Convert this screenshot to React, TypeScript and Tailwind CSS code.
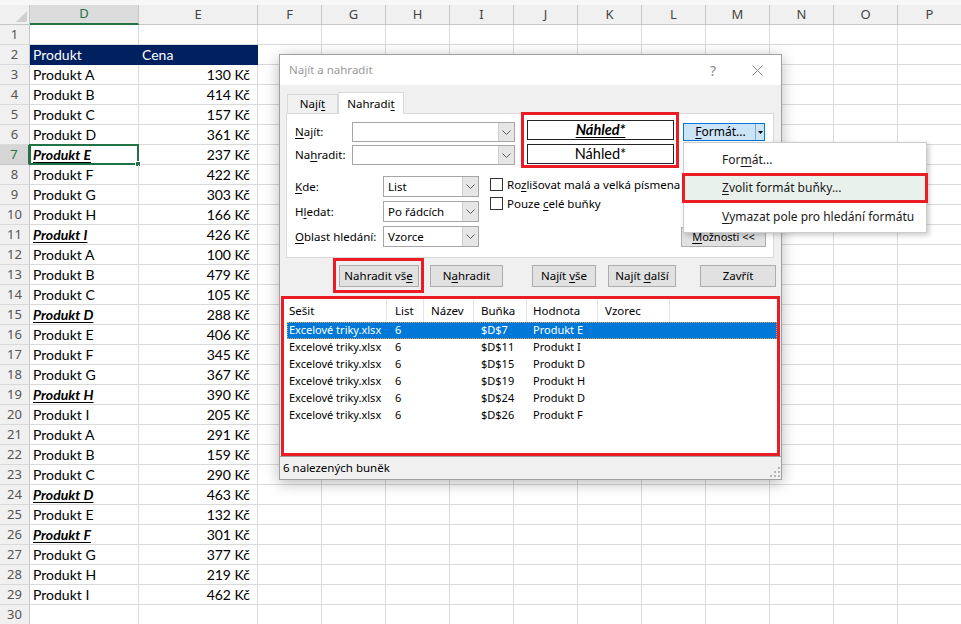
import React from "react";

type Item = { name: string; price: number; hit?: boolean };

const DATA: Item[] = [
  { name: "Produkt A", price: 130 },
  { name: "Produkt B", price: 414 },
  { name: "Produkt C", price: 157 },
  { name: "Produkt D", price: 361 },
  { name: "Produkt E", price: 237, hit: true },
  { name: "Produkt F", price: 422 },
  { name: "Produkt G", price: 303 },
  { name: "Produkt H", price: 166 },
  { name: "Produkt I", price: 426, hit: true },
  { name: "Produkt A", price: 100 },
  { name: "Produkt B", price: 479 },
  { name: "Produkt C", price: 105 },
  { name: "Produkt D", price: 288, hit: true },
  { name: "Produkt E", price: 406 },
  { name: "Produkt F", price: 345 },
  { name: "Produkt G", price: 367 },
  { name: "Produkt H", price: 390, hit: true },
  { name: "Produkt I", price: 205 },
  { name: "Produkt A", price: 291 },
  { name: "Produkt B", price: 159 },
  { name: "Produkt C", price: 290 },
  { name: "Produkt D", price: 463, hit: true },
  { name: "Produkt E", price: 132 },
  { name: "Produkt F", price: 301, hit: true },
  { name: "Produkt G", price: 377 },
  { name: "Produkt H", price: 219 },
  { name: "Produkt I", price: 462 },
];

const OTHER_COLS = ["F", "G", "H", "I", "J", "K", "L", "M", "N", "O", "P"];

const RESULTS = [
  ["$D$7", "Produkt E"],
  ["$D$11", "Produkt I"],
  ["$D$15", "Produkt D"],
  ["$D$19", "Produkt H"],
  ["$D$24", "Produkt D"],
  ["$D$26", "Produkt F"],
];

// access key underline
function K({ children }: { children: React.ReactNode }) {
  return <span className="underline underline-offset-[2px] decoration-1">{children}</span>;
}

function ColumnHeaders() {
  return (
    <div className="flex h-[25px] pt-[5px] bg-[#f7f7f7] font-['Noto_Sans',sans-serif] text-[13px] text-[#444]">
      <div className="relative w-[30px] shrink-0 border-r border-b border-[#c6c6c6] bg-[#f0f0f0]">
        <svg className="absolute right-[2px] bottom-[2px]" width="11" height="11" viewBox="0 0 11 11">
          <polygon points="11,0 11,11 0,11" fill="#cfcfcf" />
        </svg>
      </div>
      <div className="w-[109px] shrink-0 flex items-center justify-center bg-[#dcdcdc] text-[#217346] border-r border-[#c6c6c6] border-b-2 border-b-[#217346]">
        D
      </div>
      <div className="w-[119px] shrink-0 flex items-center justify-center bg-[#f0f0f0] border-r border-b border-[#c6c6c6]">
        E
      </div>
      {OTHER_COLS.map((c) => (
        <div
          key={c}
          className="w-[64px] shrink-0 flex items-center justify-center bg-[#f0f0f0] border-r border-b border-[#c6c6c6]"
        >
          {c}
        </div>
      ))}
    </div>
  );
}

function SheetRow({ n }: { n: number }) {
  const item = n >= 3 ? DATA[n - 3] : undefined;
  const head = n === 2;
  const active = n === 7;
  return (
    <div className="flex h-[20px] shrink-0">
      <div
        className={
          active
            ? "w-[30px] shrink-0 flex items-center justify-center bg-[#d6d6d6] text-[#217346] border-r-2 border-r-[#217346] border-b border-b-[#c6c6c6] font-['Noto_Sans',sans-serif] text-[13px]"
            : "w-[30px] shrink-0 flex items-center justify-center bg-[#f0f0f0] text-[#555] border-r border-r-[#c6c6c6] border-b border-b-[#dadada] font-['Noto_Sans',sans-serif] text-[13px]"
        }
      >
        {n}
      </div>
      <div
        className={
          head
            ? "w-[109px] shrink-0 flex items-center px-[3px] bg-[#002060] text-white border-b border-[#002060] text-[14px]"
            : "relative w-[109px] shrink-0 flex items-center px-[3px] border-r border-b border-[#dadada] text-[14px] text-black"
        }
      >
        {head && "Produkt"}
        {item && (
          <span className={item.hit ? "font-bold italic underline underline-offset-[2px]" : ""}>
            {item.name}
          </span>
        )}
        {active && (
          <div className="absolute -left-px -top-px -right-px -bottom-px border-2 border-[#217346]">
            <div className="absolute -right-[4px] -bottom-[4px] w-[6px] h-[6px] bg-[#217346] border border-white" />
          </div>
        )}
      </div>
      <div
        className={
          head
            ? "w-[119px] shrink-0 flex items-center px-[3px] bg-[#002060] text-white border-r border-b border-[#002060] text-[14px]"
            : "w-[119px] shrink-0 flex items-center justify-end pr-[7px] border-r border-b border-[#dadada] text-[14px] text-black"
        }
      >
        {head && "Cena"}
        {item && `${item.price} Kč`}
      </div>
      {OTHER_COLS.map((c) => (
        <div key={c} className="w-[64px] shrink-0 border-r border-b border-[#dadada]" />
      ))}
    </div>
  );
}

const ROW_NUMBERS = [
  1, 2, 3, 4, 5, 6, 7, 8, 9, 10, 11, 12, 13, 14, 15, 16, 17, 18, 19, 20, 21, 22, 23, 24, 25, 26, 27, 28, 29, 30,
];

function Sheet() {
  return (
    <div className="grid grid-rows-[25px_repeat(30,20px)] font-['Lato',sans-serif]">
      <ColumnHeaders />
      {ROW_NUMBERS.map((n) => (
        <SheetRow key={n} n={n} />
      ))}
    </div>
  );
}

function Chevron() {
  return (
    <svg width="9" height="5" viewBox="0 0 9 5">
      <path d="M0.5 0.5 L4.5 4.5 L8.5 0.5" fill="none" stroke="#5c5c5c" strokeWidth="1" />
    </svg>
  );
}

function Combo({ className, value }: { className: string; value?: string }) {
  return (
    <div className={`flex bg-white border border-[#a6a6a6] ${className}`}>
      <div className="flex-1 flex items-center pl-[4px] text-black whitespace-nowrap">{value}</div>
      <div className="w-[16px] flex items-center justify-center bg-[#e6e6e6] border-l border-[#cfcfcf]">
        <Chevron />
      </div>
    </div>
  );
}

function Btn({ className, children }: { className: string; children: React.ReactNode }) {
  return (
    <div
      className={`h-[22px] flex items-center justify-center whitespace-nowrap bg-[#e1e1e1] border border-[#adadad] text-black ${className}`}
    >
      {children}
    </div>
  );
}

function Checkbox({ children }: { children: React.ReactNode }) {
  return (
    <div className="h-[19px] flex items-start gap-[4px] whitespace-nowrap text-[11.5px]">
      <div className="w-[13px] h-[13px] shrink-0 bg-white border border-[#333]" />
      <div className="-mt-[2px]">{children}</div>
    </div>
  );
}

function FindReplaceDialog() {
  return (
    <div className="absolute left-[279px] top-[54px] w-[503px] flex flex-col bg-[#f0f0f0] border border-[#a0a0a0] shadow-[0_3px_14px_rgba(0,0,0,0.28)] font-['Noto_Sans',sans-serif] text-[11.5px] text-black whitespace-nowrap">
      {/* title bar */}
      <div className="h-[30px] flex items-center bg-white pl-[9px] text-[11.5px] text-[#9a9a9a]">
        <span>Najít a nahradit</span>
        <span className="ml-auto text-[14px] text-[#8a8a8a]">?</span>
        <svg className="ml-[36px] mr-[18px]" width="11" height="11" viewBox="0 0 11 11">
          <path d="M0.5 0.5 L10.5 10.5 M10.5 0.5 L0.5 10.5" stroke="#8a8a8a" strokeWidth="1" />
        </svg>
      </div>

      {/* tabs */}
      <div className="flex items-end h-[21px] mt-[7px] pl-[7px]">
        <div className="w-[51px] h-[19px] flex items-center justify-center border border-b-0 border-[#d9d9d9] bg-[#f0f0f0]">
          Nají<K>t</K>
        </div>
        <div className="relative z-10 -mb-px w-[66px] h-[22px] flex items-center justify-center border border-b-0 border-[#d9d9d9] bg-white">
          Nahradi<K>t</K>
        </div>
      </div>

      {/* panel */}
      <div className="ml-[6px] w-[488px] h-[145px] bg-white border border-[#d9d9d9]">
        <div className="flex items-start">
          <div className="ml-[8px] mt-[8px] grid grid-cols-[57px_163px] gap-y-[3px] items-center">
            <div>
              <K>N</K>ajít:
            </div>
            <Combo className="h-[20px]" />
            <div>
              Na<K>h</K>radit:
            </div>
            <Combo className="h-[20px]" />
          </div>
          <div className="ml-[6px] -mt-[2px] w-[158px] h-[56px] border-[3px] border-[#ec1c24] pl-[3px] pt-[5px] flex flex-col gap-[4px]">
            <div className="w-[147px] h-[20px] flex items-center justify-center border border-[#222] font-['Lato',sans-serif] text-[14.5px] font-bold italic">
              <span className="underline underline-offset-[2px]">Náhled*</span>
            </div>
            <div className="w-[147px] h-[20px] flex items-center justify-center border border-[#222] font-['Lato',sans-serif] text-[14.5px]">
              Náhled*
            </div>
          </div>
          <div className="ml-[4px] mt-[9px] w-[82px] h-[18px] flex items-center bg-[#cce4f7] border border-[#0078d7] text-[12px]">
            <div className="flex-1 text-center pl-[2px]">
              <K>F</K>ormát...
            </div>
            <div className="w-[9px] h-full flex items-center justify-center border-l border-[#8aa9c6]">
              <svg width="5" height="3" viewBox="0 0 5 3">
                <polygon points="0,0 5,0 2.5,3" fill="#000" />
              </svg>
            </div>
          </div>
        </div>

        <div className="flex items-start mt-[8px]">
          <div className="ml-[8px] grid grid-cols-[88px_96px] gap-y-[4px] items-center">
            <div>
              <K>K</K>de:
            </div>
            <Combo className="h-[21px]" value="List" />
            <div>
              H<K>l</K>edat:
            </div>
            <Combo className="h-[21px]" value="Po řádcích" />
            <div>
              <K>O</K>blast hledání:
            </div>
            <Combo className="h-[21px]" value="Vzorce" />
          </div>
          <div className="ml-[11px] mt-[2px] flex flex-col">
            <Checkbox>
              Ro<K>z</K>lišovat malá a velká písmena
            </Checkbox>
            <Checkbox>
              Pouze <K>c</K>elé buňky
            </Checkbox>
          </div>
          <Btn className="ml-auto mr-[7px] self-end w-[85px] !h-[20px] text-[11px]">
            <span>
              <K>M</K>ožnosti &lt;&lt;
            </span>
          </Btn>
        </div>
      </div>

      {/* command buttons */}
      <div className="flex items-start h-[35px]">
        <div className="ml-[53px] w-[91px] h-[35px] border-[3px] border-[#ec1c24] flex items-center justify-center">
          <Btn className="w-[80px]">
            <span>
              Nahradit vš<K>e</K>
            </span>
          </Btn>
        </div>
        <Btn className="ml-[6px] mt-[7px] w-[73px]">
          <span>
            N<K>a</K>hradit
          </span>
        </Btn>
        <Btn className="ml-[29px] mt-[7px] w-[64px]">
          <span>
            Najít <K>v</K>še
          </span>
        </Btn>
        <Btn className="ml-[12px] mt-[7px] w-[68px]">
          <span>
            Najít <K>d</K>alší
          </span>
        </Btn>
        <Btn className="ml-[24px] mt-[7px] w-[76px]">Zavřít</Btn>
      </div>

      {/* results */}
      <div className="mt-[3px] ml-px w-[499px] h-[160px] border-[3px] border-[#ec1c24] bg-white text-[11px]">
        <div className="flex h-[23px] items-center text-[11.5px]">
          <div className="w-[103px] h-full flex items-center pl-[5px] border-r border-[#e5e5e5]">Sešit</div>
          <div className="w-[37px] h-full flex items-center pl-[8px] border-r border-[#e5e5e5]">List</div>
          <div className="w-[50px] h-full flex items-center pl-[7px] border-r border-[#e5e5e5]">Název</div>
          <div className="w-[53px] h-full flex items-center pl-[7px] border-r border-[#e5e5e5]">Buňka</div>
          <div className="w-[71px] h-full flex items-center pl-[6px] border-r border-[#e5e5e5]">Hodnota</div>
          <div className="w-[72px] h-full flex items-center pl-[7px] border-r border-[#e5e5e5]">Vzorec</div>
        </div>
        {RESULTS.map(([cell, value], i) => (
          <div
            key={cell}
            className={
              i === 0
                ? "ml-[3px] flex h-[17px] items-center bg-[#0078d7] text-white outline outline-1 outline-dotted outline-[#d8a060] -outline-offset-1"
                : "ml-[3px] flex h-[17px] items-center text-black"
            }
          >
            <div className="w-[100px] pl-[2px]">Excelové triky.xlsx</div>
            <div className="w-[37px] pl-[8px]">6</div>
            <div className="w-[50px]" />
            <div className="w-[53px] pl-[7px]">{cell}</div>
            <div className="w-[71px] pl-[6px]">{value}</div>
            <div className="flex-1" />
          </div>
        ))}
      </div>

      {/* status bar */}
      <div className="h-[23px] flex items-center pl-[3px] border-t border-[#a0a0a0] bg-[#f0f0f0]">
        <span>6 nalezených buněk</span>
        <svg className="ml-auto mr-px mt-[8px]" width="10" height="10" viewBox="0 0 10 10">
          <rect x="8" y="0" width="2" height="2" fill="#b5b5b5" />
          <rect x="8" y="4" width="2" height="2" fill="#b5b5b5" />
          <rect x="4" y="4" width="2" height="2" fill="#b5b5b5" />
          <rect x="8" y="8" width="2" height="2" fill="#b5b5b5" />
          <rect x="4" y="8" width="2" height="2" fill="#b5b5b5" />
          <rect x="0" y="8" width="2" height="2" fill="#b5b5b5" />
        </svg>
      </div>
    </div>
  );
}

function FormatMenu() {
  return (
    <div className="absolute left-[683px] top-[142px] w-[244px] flex flex-col pt-[3px] pb-px bg-white border border-[#cccccc] shadow-[2px_2px_5px_rgba(0,0,0,0.22)] font-['Noto_Sans',sans-serif] text-[12px] text-[#1a1a1a] whitespace-nowrap">
      <div className="h-[27px] flex items-center pl-[38px]">
        For<K>m</K>át...
      </div>
      <div className="-mx-[2px] h-[30px] flex items-center pl-[37px] bg-[#e9f1ec] border-[3px] border-[#ec1c24]">
        <span>
          <K>Z</K>volit formát buňky...
        </span>
      </div>
      <div className="h-[28px] flex items-center pl-[38px]">
        <span>
          <K>V</K>ymazat pole pro hledání formátu
        </span>
      </div>
    </div>
  );
}

export default function App() {
  return (
    <div className="relative w-[961px] h-[624px] overflow-clip bg-white">
      <Sheet />
      <FindReplaceDialog />
      <FormatMenu />
    </div>
  );
}
